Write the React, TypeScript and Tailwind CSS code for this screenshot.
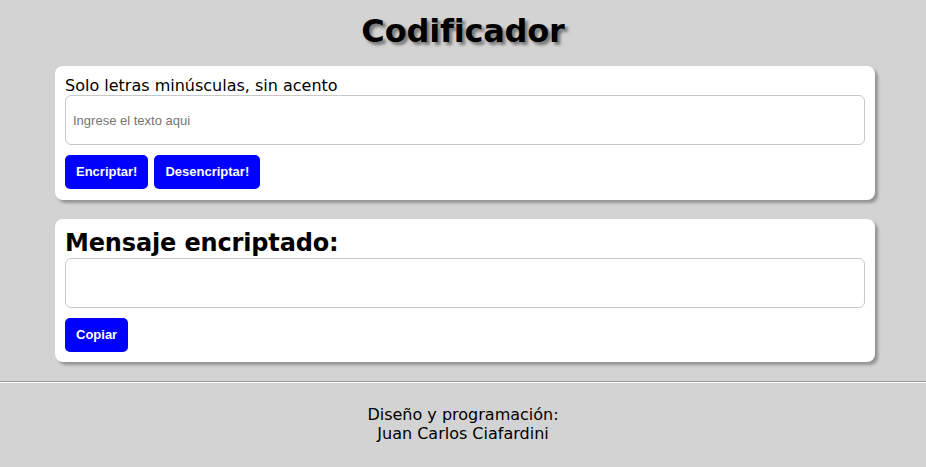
import React from "react";

const sans = "font-['Verdana','DejaVu_Sans',sans-serif]";
const arial = "font-['Arial','Liberation_Sans',sans-serif]";

const App: React.FC = () => {
  return (
    <div className={`min-h-[467px] bg-[#d3d3d3] ${sans} text-black`}>
      <header className="pt-[13px] pb-[16px] text-center">
        <h1 className="text-[32px] leading-[37px] font-bold tracking-[-0.2px] [text-shadow:3px_3px_3px_#777]">
          Codificador
        </h1>
      </header>

      <main className="flex flex-col gap-[19px] pl-[55px] pr-[51px]">
        <section className="bg-white rounded-[8px] px-[10px] pt-[10px] pb-[11px] shadow-[3px_3px_3px_rgba(0,0,0,0.3)]">
          <label className="block text-[16px] leading-[19px]">
            Solo letras minúsculas, sin acento
          </label>
          <input
            type="text"
            placeholder="Ingrese el texto aqui"
            className={`block w-full h-[50px] border border-[#c8c8c8] rounded-[6px] px-[7px] text-[13px] ${arial} placeholder:text-[#757575] outline-none`}
          />
          <div className="flex gap-[6px] mt-[10px]">
            <button
              className={`h-[34px] px-[11px] bg-[#0000ff] text-white text-[13px] font-bold rounded-[5px] ${arial}`}
            >
              Encriptar!
            </button>
            <button
              className={`h-[34px] px-[11px] bg-[#0000ff] text-white text-[13px] font-bold rounded-[5px] ${arial}`}
            >
              Desencriptar!
            </button>
          </div>
        </section>

        <section className="bg-white rounded-[8px] px-[10px] pt-[10px] pb-[10px] shadow-[3px_3px_3px_rgba(0,0,0,0.3)]">
          <h2 className="text-[24px] leading-[29px] font-bold tracking-[-0.15px]">Mensaje encriptado:</h2>
          <textarea
            readOnly
            className={`block w-full h-[50px] border border-[#c8c8c8] rounded-[6px] px-[7px] resize-none ${arial} outline-none`}
          />
          <button
            className={`mt-[10px] h-[34px] px-[11px] bg-[#0000ff] text-white text-[13px] font-bold rounded-[5px] ${arial}`}
          >
            Copiar
          </button>
        </section>
      </main>

      <footer className="mt-[19px]">
        <hr className="border-0 border-t border-t-[#9a9a9a] border-b border-b-white" />
        <p className="pt-[22px] text-center text-[16px] leading-[19px]">
          Diseño y programación:
          <br />
          Juan Carlos Ciafardini
        </p>
      </footer>
    </div>
  );
};

export default App;
